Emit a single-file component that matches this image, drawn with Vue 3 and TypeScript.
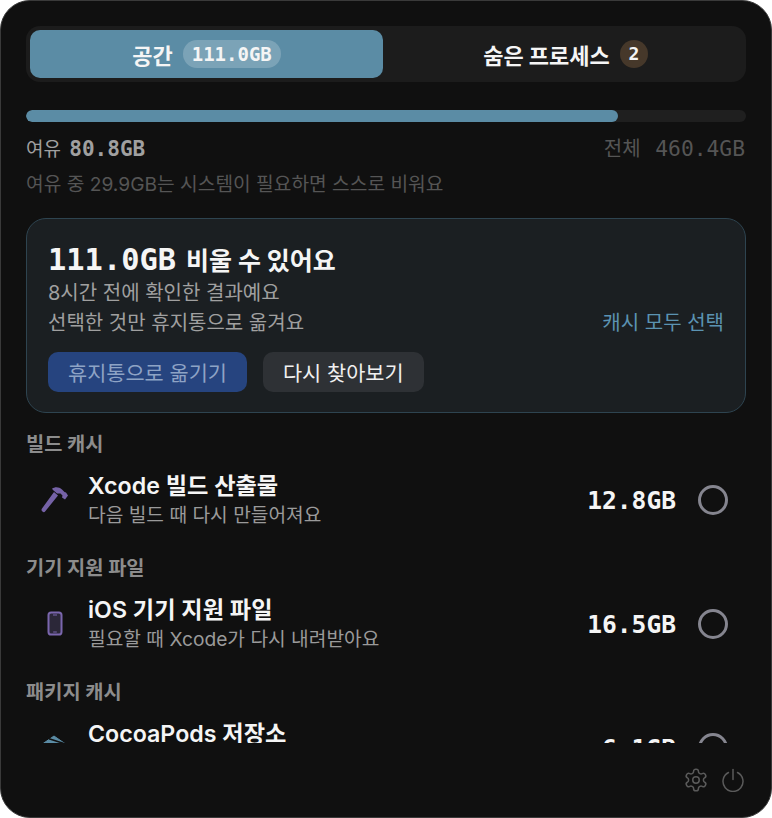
<template>
  <div class="panel">
    <div class="tabs">
      <div class="tab active">
        <span>공간</span>
        <span class="pill mono">111.0GB</span>
      </div>
      <div class="tab second">
        <span>숨은 프로세스</span>
        <span class="count mono">2</span>
      </div>
    </div>

    <div class="track">
      <div class="fill" :style="{ width: `${usedPercent}%` }"></div>
    </div>
    <div class="meta">
      <span class="free">여유 <b class="mono">80.8GB</b></span>
      <span class="total">전체 <b class="mono">460.4GB</b></span>
    </div>
    <p class="note">여유 중 29.9GB는 시스템이 필요하면 스스로 비워요</p>

    <section class="card">
      <h1><span class="mono">111.0GB</span> 비울 수 있어요</h1>
      <p class="sub">8시간 전에 확인한 결과예요</p>
      <div class="sub-row">
        <p class="sub">선택한 것만 휴지통으로 옮겨요</p>
        <span class="link">캐시 모두 선택</span>
      </div>
      <div class="actions">
        <button class="btn primary">휴지통으로 옮기기</button>
        <button class="btn">다시 찾아보기</button>
      </div>
    </section>

    <div class="list">
      <div v-for="group in groups" :key="group.label" class="group">
        <div class="group-label">{{ group.label }}</div>
        <div class="row">
          <div class="icon">
            <svg v-if="group.icon === 'hammer'" width="30" height="30" viewBox="0 0 30 30" fill="#7562a6">
              <path d="M3 23.5 15 7l4 3.5L6.500 26c-1 1.400-2 1.500-3 .6-1.200-1-1.300-2-.5-3.100Z" />
              <path d="M13 3.800c3-2.300 7-2 10 .7L25.500 7l1.500.5 2 3-3 4-3-2 .5-2-2-2h-3.500L14 5Z" />
            </svg>
            <svg v-else-if="group.icon === 'phone'" width="30" height="30" viewBox="0 0 30 30">
              <rect x="9.500" y="3.500" width="13" height="22" rx="2.600" fill="#2b2738" stroke="#7a66ad" stroke-width="2" />
              <path d="M14 6h4M14.200 23h3.600" stroke="#7a66ad" stroke-width="1" />
            </svg>
            <svg v-else width="30" height="30" viewBox="0 0 30 30">
              <path d="M15 3 28 12 15 21 2 12Z" fill="#5b8ca5" stroke="#5b8ca5" stroke-linejoin="round" />
              <path d="M10 5.800 25 10.500" stroke="#101010" stroke-width="1.600" />
            </svg>
          </div>
          <div class="info">
            <div class="name">{{ group.name }}</div>
            <div class="desc">{{ group.desc }}</div>
          </div>
          <span class="size mono">{{ group.size }}</span>
          <span class="radio"></span>
        </div>
      </div>
    </div>

    <footer class="foot">
      <svg class="gear" width="26" height="26" viewBox="0 0 24 24" fill="none" stroke="#5a5a5a" stroke-width="1.400" stroke-linecap="round" stroke-linejoin="round">
        <path d="M12.220 2h-.44a2 2 0 0 0-2 2v.18a2 2 0 0 1-1 1.730l-.43.25a2 2 0 0 1-2 0l-.15-.08a2 2 0 0 0-2.730.73l-.22.38a2 2 0 0 0 .73 2.730l.15.1a2 2 0 0 1 1 1.720v.51a2 2 0 0 1-1 1.740l-.15.09a2 2 0 0 0-.73 2.730l.22.38a2 2 0 0 0 2.730.73l.15-.08a2 2 0 0 1 2 0l.43.25a2 2 0 0 1 1 1.730V20a2 2 0 0 0 2 2h.44a2 2 0 0 0 2-2v-.18a2 2 0 0 1 1-1.730l.43-.25a2 2 0 0 1 2 0l.15.08a2 2 0 0 0 2.730-.73l.22-.39a2 2 0 0 0-.73-2.730l-.15-.08a2 2 0 0 1-1-1.740v-.5a2 2 0 0 1 1-1.740l.15-.09a2 2 0 0 0 .73-2.730l-.22-.38a2 2 0 0 0-2.730-.73l-.15.08a2 2 0 0 1-2 0l-.43-.25a2 2 0 0 1-1-1.730V4a2 2 0 0 0-2-2z" />
        <circle cx="12" cy="12" r="3" />
      </svg>
      <svg width="24" height="24" viewBox="0 0 24 24" fill="none" stroke="#5a5a5a" stroke-width="1.500" stroke-linecap="round">
        <path d="M12 1.500v10" />
        <path d="M16.500 4.500a10 10 0 1 1-9 0" />
      </svg>
    </footer>
  </div>
</template>

<script setup lang="ts">
interface Group {
  label: string
  icon: 'hammer' | 'phone' | 'stack'
  name: string
  desc: string
  size: string
}

const usedPercent = 82.2

// the third row runs under the footer, its second line never shows
const groups: Group[] = [
  { label: '빌드 캐시', icon: 'hammer', name: 'Xcode 빌드 산출물', desc: '다음 빌드 때 다시 만들어져요', size: '12.8GB' },
  { label: '기기 지원 파일', icon: 'phone', name: 'iOS 기기 지원 파일', desc: '필요할 때 Xcode가 다시 내려받아요', size: '16.5GB' },
  { label: '패키지 캐시', icon: 'stack', name: 'CocoaPods 저장소', desc: '', size: '6.1GB' },
]
</script>

<style>
html,
body {
  background: #ffffff;
}
</style>

<style scoped>
.panel {
  width: 772px;
  height: 818px;
  box-sizing: border-box;
  padding: 26px 26px 0;
  display: flex;
  flex-direction: column;
  overflow: hidden;
  background: #101010;
  border: 1px solid #3a3a3a;
  border-radius: 30px;
  color: #f5f5f5;
  font-family: Inter, "Noto Sans CJK KR", sans-serif;
}

.mono {
  font-family: "DejaVu Sans Mono", "Liberation Mono", monospace;
  font-weight: 700;
}

.tabs {
  display: grid;
  grid-template-columns: 353px 1fr;
  margin: -1px -1px 0;
  padding: 4px;
  height: 56px;
  box-sizing: border-box;
  background: #1c1c1c;
  border-radius: 14px;
}

.tab {
  display: flex;
  align-items: center;
  justify-content: center;
  gap: 10px;
  border-radius: 10px;
  font-size: 22px;
  font-weight: 700;
}

.tab.active {
  background: #5b8ca5;
}

.tab.second {
  padding-left: 6px;
}

.pill {
  padding: 0 9px;
  height: 28px;
  line-height: 28px;
  border-radius: 14px;
  font-size: 19px;
  background: rgba(255, 255, 255, 0.2);
}

.count {
  width: 28px;
  height: 28px;
  line-height: 28px;
  text-align: center;
  border-radius: 50%;
  font-size: 18px;
  background: #46382a;
}

.track {
  height: 12px;
  margin: 28px -1px 0;
  border-radius: 6px;
  background: #1f1f1f;
  overflow: hidden;
}

.fill {
  height: 100%;
  border-radius: 6px;
  background: #5b8ca5;
}

.meta {
  display: flex;
  justify-content: space-between;
  margin: 13px -1px 0;
  height: 28px;
  line-height: 28px;
  font-size: 19px;
}

.meta b {
  font-size: 21px;
  margin-left: 3px;
}

.free {
  color: #a0a0a0;
}

.total {
  font-size: 20px;
  color: #555555;
}

.total b {
  font-size: 21.300px;
  font-weight: 400;
  margin: 0 1px 0 9px;
}

.note {
  margin: 8px -1px 0;
  font-size: 19.200px;
  line-height: 26px;
  color: #555555;
}

.card {
  margin: 21px -1px 0;
  padding: 22px 21px 0;
  height: 195px;
  box-sizing: border-box;
  background: #1b1f22;
  border: 1px solid #2e4450;
  border-radius: 20px;
}

.card h1 {
  margin: 0 0 -2px;
  font-size: 25px;
  font-weight: 700;
  line-height: 38px;
}

.card h1 .mono {
  font-size: 30.400px;
  margin-right: 4px;
}

.sub {
  margin: 0;
  font-size: 20px;
  line-height: 30px;
  color: #a0a0a0;
}

.sub-row {
  display: flex;
  justify-content: space-between;
  align-items: center;
}

.link {
  font-size: 20px;
  line-height: 30px;
  color: #5b93b2;
}

.actions {
  display: flex;
  gap: 16px;
  margin-top: 14px;
}

.btn {
  height: 40px;
  padding: 0 20px;
  border: 0;
  border-radius: 10px;
  font-family: inherit;
  font-size: 20.800px;
  background: #2e3135;
  color: #f0f0f0;
}

.btn.primary {
  background: #26447f;
  color: #8ea3c5;
}

.list {
  flex: 1;
  min-height: 0;
  margin: 18px -1px 0;
  overflow: hidden;
}

.group {
  margin-bottom: 12px;
}

.group-label {
  height: 26px;
  line-height: 26px;
  font-size: 19.800px;
  font-weight: 700;
  color: #8c8c8c;
}

.row {
  display: flex;
  align-items: center;
  height: 86px;
  padding: 0 18px 0 13px;
}

.icon {
  width: 30px;
  height: 30px;
  margin-right: 19px;
}

.info {
  flex: 1;
}

.name {
  font-size: 23.200px;
  line-height: 30px;
  font-weight: 600;
}

.desc {
  min-height: 28px;
  font-size: 19.200px;
  line-height: 28px;
  color: #9a9a9a;
}

.size {
  font-size: 24.600px;
  margin-right: 22px;
}

.radio {
  width: 30px;
  height: 30px;
  box-sizing: border-box;
  border: 3px solid #85858f;
  border-radius: 50%;
}

.foot {
  flex: none;
  height: 74px;
  display: flex;
  align-items: center;
  justify-content: flex-end;
  gap: 12px;
  padding: 25px 0 25px;
  box-sizing: border-box;
}
</style>
